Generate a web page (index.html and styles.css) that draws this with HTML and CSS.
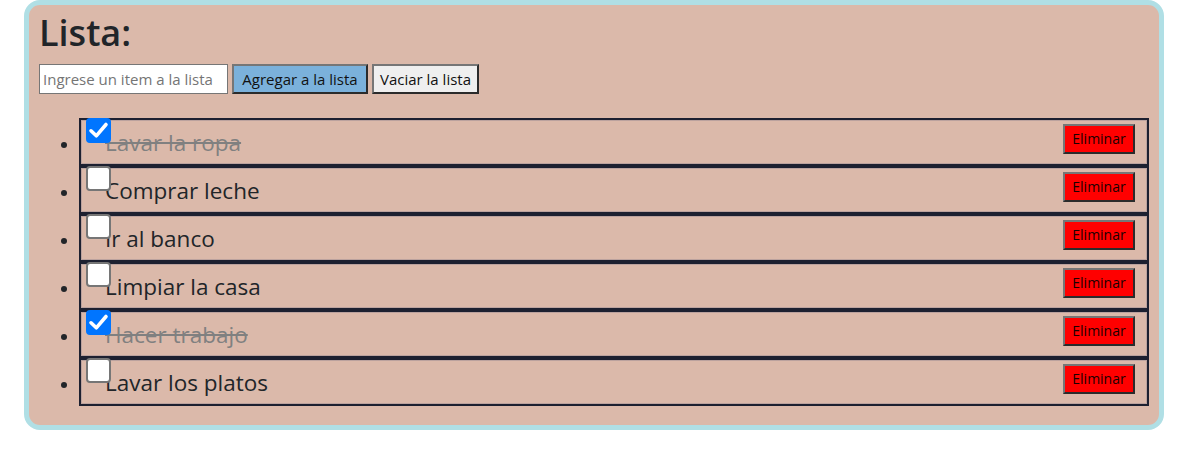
FILE: index.html
```html
<!DOCTYPE html>
<html lang="es">
<head>
<meta charset="utf-8">
<title>Lista</title>
<link rel="stylesheet" href="styles.css">
</head>
<body>
<div class="card">
  <h1 class="title">Lista:</h1>
  <div class="controls">
    <input class="field" type="text" placeholder="Ingrese un item a la lista">
    <button class="btn btn-add">Agregar a la lista</button>
    <button class="btn btn-clear">Vaciar la lista</button>
  </div>
  <ul class="list">
    <li class="item done"><button class="btn btn-del">Eliminar</button><span class="box on"><svg viewBox="0 0 25 25" width="25" height="25"><path d="M5 12.8 L10.3 17.8 L20 6.5" stroke="#fff" stroke-width="3.6" fill="none" stroke-linecap="round" stroke-linejoin="round"/></svg></span><span class="label">Lavar la ropa</span></li>
    <li class="item"><button class="btn btn-del">Eliminar</button><span class="box"></span><span class="label">Comprar leche</span></li>
    <li class="item"><button class="btn btn-del">Eliminar</button><span class="box"></span><span class="label">Ir al banco</span></li>
    <li class="item"><button class="btn btn-del">Eliminar</button><span class="box"></span><span class="label">Limpiar la casa</span></li>
    <li class="item done"><button class="btn btn-del">Eliminar</button><span class="box on"><svg viewBox="0 0 25 25" width="25" height="25"><path d="M5 12.8 L10.3 17.8 L20 6.5" stroke="#fff" stroke-width="3.6" fill="none" stroke-linecap="round" stroke-linejoin="round"/></svg></span><span class="label">Hacer trabajo</span></li>
    <li class="item"><button class="btn btn-del">Eliminar</button><span class="box"></span><span class="label">Lavar los platos</span></li>
  </ul>
</div>
</body>
</html>
```
FILE: styles.css
```css
* { box-sizing: border-box; }

body {
  margin: 0;
  background: #fff;
  font-family: "Open Sans", "Noto Sans", sans-serif;
  color: #212529;
  font-size: 16px;
}

.card {
  width: 1140px;
  margin: 0 0 0 24px;
  height: 430px;
  background: #dbb9aa;
  border: 5px solid #b0dfe5;
  border-radius: 16px;
  padding: 4px 10px 0 10px;
}

.title {
  margin: 0;
  font-size: 36px;
  line-height: 48px;
  font-weight: 600;
  color: #212529;
}

.controls {
  margin-top: 7px;
  display: flex;
  gap: 4px;
  height: 30px;
}

.field {
  width: 189px;
  height: 30px;
  border: 1px solid #767676;
  background: #fff;
  font-family: inherit;
  font-size: 15px;
  padding: 0 3px;
  color: #212529;
}
.field::placeholder { color: #757575; }

.btn {
  font-family: inherit;
  font-size: 15px;
  height: 30px;
  border-width: 2px;
  border-style: solid;
  border-color: #767676 #2b2b2b #2b2b2b #767676;
  padding: 0 2px;
  color: #111;
  white-space: nowrap;
  cursor: pointer;
}

.btn-add { background: #7bb1db; width: 136px; }
.btn-clear { background: #efefef; width: 107px; }

.list {
  margin: 24px 0 0 0;
  padding-left: 40px;
}

.item {
  height: 48px;
  border: 2px solid #1d2030;
  box-shadow: inset 0 0 0 1px rgba(60, 72, 110, 0.2);
  font-size: 16px;
  line-height: 44px;
}

.btn-del {
  float: right;
  margin: 4px 12px 0 0;
  width: 72px;
  background: #ff0000;
  color: #1a0000;
  padding: 0;
  font-size: 14px;
  line-height: 26px;
}

.box {
  display: inline-block;
  vertical-align: top;
  width: 25px;
  height: 25px;
  margin: -2px 0 0 5px;
  background: #fff;
  border: 2px solid #767676;
  border-radius: 4px;
  position: relative;
  z-index: 1;
}
.box.on {
  background: #0075ff;
  border-color: #0075ff;
}
.box svg {
  display: block;
  margin: -2px;
}

.label {
  font-size: 22.5px;
  margin-left: -6px;
  color: #212529;
  position: relative;
  top: 1px;
}

.done .label {
  color: #808080;
  text-decoration: line-through;
}
```
